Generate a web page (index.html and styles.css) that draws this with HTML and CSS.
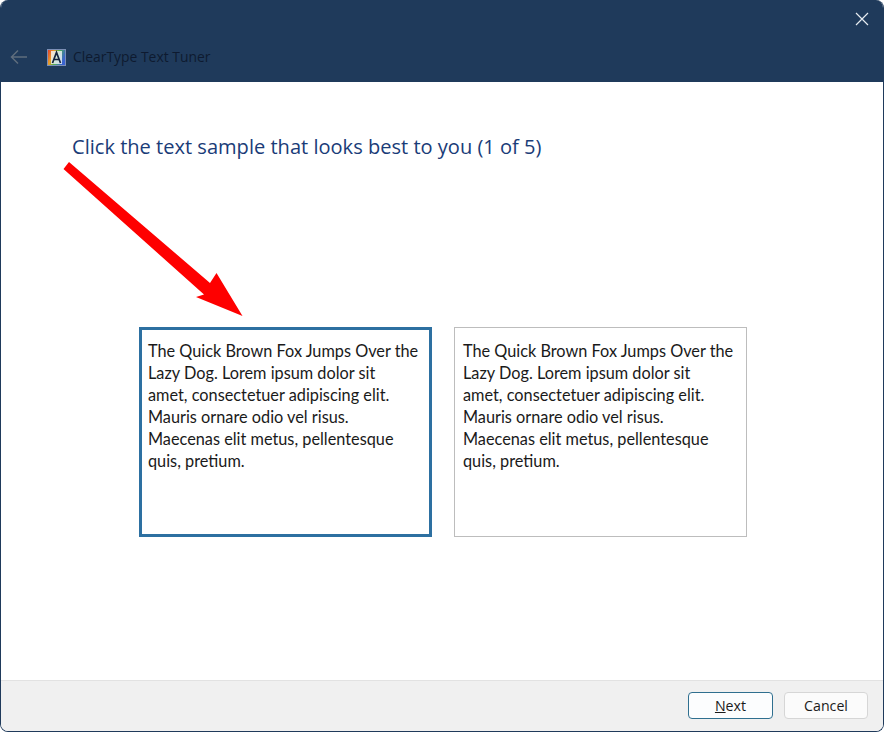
FILE: index.html
```html
<!DOCTYPE html>
<html lang="en">
<head>
<meta charset="utf-8">
<title>ClearType Text Tuner</title>
<link rel="stylesheet" href="styles.css">
</head>
<body>
<div class="window">
  <header class="titlebar">
    <div class="titlebar-top">
      <svg class="close-icon" width="14" height="14" viewBox="0 0 14 14"><path d="M1 1L13 13M13 1L1 13" stroke="#e6ebf0" stroke-width="1.2" fill="none"/></svg>
    </div>
    <div class="titlebar-row">
      <svg class="back-icon" width="18" height="16" viewBox="0 0 18 16"><path d="M17 8H1.5M8 1.5L1.5 8L8 14.5" stroke="#5f6d7d" stroke-width="1.5" fill="none"/></svg>
      <svg class="app-icon" width="19" height="17" viewBox="0 0 19 17">
        <defs><linearGradient id="rainbow" x1="0" y1="0" x2="1" y2="0.35">
          <stop offset="0" stop-color="#e0342b"/><stop offset="0.35" stop-color="#e8a02c"/><stop offset="0.6" stop-color="#4fb04c"/><stop offset="1" stop-color="#3a63d0"/>
        </linearGradient></defs>
        <rect x="0.5" y="0.5" width="18" height="16" fill="url(#rainbow)" stroke="#7d8fb5"/>
        <rect x="4" y="2" width="11" height="13" fill="#f2f5fa" opacity="0.8"/>
        <path d="M5.5 14L9.5 3.5L13.5 14M7 10.5H12" stroke="#14243f" stroke-width="1.7" fill="none"/>
      </svg>
      <span class="app-title">ClearType Text Tuner</span>
    </div>
  </header>
  <main class="content">
    <h1 class="heading">Click the text sample that looks best to you (1 of 5)</h1>
    <div class="samples">
      <div class="sample sample-selected">The Quick Brown Fox Jumps Over the<br>Lazy Dog. Lorem ipsum dolor sit<br>amet, consectetuer adipiscing elit.<br>Mauris ornare odio vel risus.<br>Maecenas elit metus, pellentesque<br>quis, pretium.</div>
      <div class="sample">The Quick Brown Fox Jumps Over the<br>Lazy Dog. Lorem ipsum dolor sit<br>amet, consectetuer adipiscing elit.<br>Mauris ornare odio vel risus.<br>Maecenas elit metus, pellentesque<br>quis, pretium.</div>
    </div>
    <svg class="arrow" width="200" height="170" viewBox="0 0 200 170"><path d="M3.5 21L9 14L150 135L156.5 125L182.5 168L136 149L144 146.5Z" fill="#fe0000"/></svg>
  </main>
  <footer class="footer">
    <button class="btn btn-default" type="button"><span class="mnemonic">N</span>ext</button>
    <button class="btn" type="button">Cancel</button>
  </footer>
</div>
</body>
</html>
```
FILE: styles.css
```css
* { box-sizing: border-box; }
html, body { margin: 0; padding: 0; background: #fff; }
body { width: 884px; height: 732px; overflow: hidden; }
.window {
  width: 884px; height: 732px;
  display: flex; flex-direction: column;
  border-radius: 8px;
  overflow: hidden;
  border: 1px solid #1f3a5b;
  border-top: 0;
  background: #fff;
}
.titlebar {
  height: 82px; flex: none;
  background: #1f3a5b;
  display: flex; flex-direction: column;
  margin: 0 -1px;
}
.titlebar-top { display: flex; justify-content: flex-end; padding: 12px 15px 0 0; height: 40px; }
.titlebar-row { display: flex; align-items: center; padding: 7px 0 0 10px; }
.back-icon { flex: none; }
.app-icon { flex: none; margin-left: 19px; }
.app-title {
  margin-left: 7px;
  font: 13.9px/20px "Open Sans", "Liberation Sans", sans-serif;
  color: #0e1a30;
}
.content { flex: 1; position: relative; padding: 52px 0 0 71px; }
.heading {
  margin: 0;
  font: 400 20.07px/26px "Open Sans", "Liberation Sans", sans-serif;
  color: #1a3c78;
}
.samples { display: flex; gap: 22px; margin: 167px 0 0 67px; }
.sample {
  width: 293px; height: 210px;
  border: 1px solid #bdbdbd;
  padding: 12px 8px 0 8px;
  font: 16.3px/22px "Lato", "Liberation Sans", sans-serif;
  color: #1a1a1a;
}
.sample-selected { border: 3px solid #2d70a1; padding: 10px 6px 0 6px; }
.arrow { position: absolute; left: 59px; top: 66px; }
.footer {
  height: 51px; flex: none;
  background: #f0f0f0;
  border-top: 1px solid #e2e2e2;
  display: flex; justify-content: flex-end; align-items: flex-start;
  gap: 11px;
  padding: 11px 15px 0 0;
}
.btn {
  width: 84px; height: 27px;
  padding: 0;
  background: #fbfbfb;
  border: 1px solid #d6d6d6;
  border-radius: 4px;
  font: 14.2px/20px "Open Sans", "Liberation Sans", sans-serif;
  color: #1a1a1a;
}
.btn-default { width: 85px; border-color: #2f6f8f; background: #fcfdfe; }
.mnemonic { text-decoration: underline; }
```
